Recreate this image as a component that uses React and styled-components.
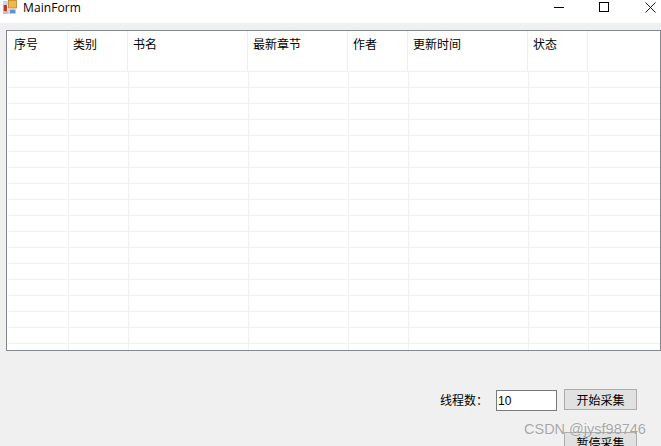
import React from 'react'
import styled, { createGlobalStyle } from 'styled-components'

const Global = createGlobalStyle`
html, body {
  margin: 0;
  padding: 0;
  height: 100%;
  overflow: hidden;
  background: #f0f0f0;
}
`

const columns = [
  { name: '序号', width: 61 },
  { name: '类别', width: 60 },
  { name: '书名', width: 120 },
  { name: '最新章节', width: 100 },
  { name: '作者', width: 60 },
  { name: '更新时间', width: 120 },
  { name: '状态', width: 60 },
]

const rowCount = 18

const Window = styled.div`
width: 661px;
height: 446px;
position: relative;
overflow: hidden;
background: #f0f0f0;
font-family: "Noto Sans CJK SC", "Liberation Sans", sans-serif;
font-size: 12px;
color: #000;
`

const TitleBar = styled.div`
height: 23px;
background: #fff;
display: flex;
align-items: flex-start;
`

const AppIcon = styled.svg`
width: 14px;
height: 14px;
margin: 0 0 0 3px;
flex: none;
`

const TitleText = styled.span`
margin: 0 0 0 6px;
font-family: "Open Sans", "Liberation Sans", sans-serif;
font-size: 12px;
letter-spacing: 0.1px;
line-height: 15px;
color: #000;
`

const WindowButtons = styled.div`
margin-left: auto;
padding: 2px 5px 0 0;
display: flex;
gap: 35px;
`

const WindowButton = styled.svg`
width: 11px;
height: 11px;
display: block;
`

const Grid = styled.div`
margin: 7px 0 0 6px;
width: 655px;
height: 321px;
box-sizing: border-box;
border: 1px solid #828790;
background: #fff;
overflow: hidden;
`

const HeaderRow = styled.div`
display: flex;
height: 40px;
`

const HeaderCell = styled.div`
width: ${props => props.$width}px;
box-sizing: border-box;
padding: 5px 0 0 ${props => props.$inset}px;
border-right: 1px solid #eeeeee;
line-height: 16px;
font-size: 12px;
color: #000;
`

const Row = styled.div`
display: flex;
height: 16px;
margin-left: 1px;
border-top: 1px solid #f0f0f0;
box-sizing: border-box;
`

const Cell = styled.div`
width: ${props => props.$width}px;
box-sizing: border-box;
border-right: 1px solid #f0f0f0;
`

const Filler = styled.div`
flex: 1;
`

const Controls = styled.div`
margin-top: 38px;
display: flex;
justify-content: flex-end;
padding-right: 24px;
`

const ControlLabel = styled.span`
line-height: 19px;
margin: 1px 8px 0 0;
font-size: 12px;
`

const CountInput = styled.input`
width: 61px;
height: 21px;
margin: 1px 7px 0 0;
box-sizing: border-box;
border: 1px solid #7a7a7a;
background: #fff;
padding: 0 1px;
font-family: "Liberation Sans", sans-serif;
font-size: 12px;
color: #000;
outline: none;
`

const ActionButton = styled.button`
width: 73px;
height: 21px;
box-sizing: border-box;
border: 1px solid #adadad;
background: #e1e1e1;
padding: 0;
font-family: "Noto Sans CJK SC", sans-serif;
font-size: 12px;
line-height: 19px;
color: #000;
display: block;
`

const SecondRow = styled.div`
margin-top: 21px;
display: flex;
justify-content: flex-end;
padding-right: 24px;
`

const Watermark = styled.div`
position: absolute;
left: 524px;
top: 420px;
font-family: "Liberation Sans", sans-serif;
font-size: 14.5px;
line-height: 18px;
color: rgba(110, 110, 110, 0.6);
text-shadow: 0 0 1px rgba(255, 255, 255, 0.7);
white-space: nowrap;
`

const App = () => {
  return (
    <Window>
      <Global />
      <TitleBar>
        <AppIcon viewBox="0 0 14 14">
          <rect x="0" y="1" width="5" height="4" fill="#d4d4d4" />
          <rect x="0" y="11" width="5" height="3" fill="#c4c4c4" />
          <rect x="0.5" y="5" width="3.5" height="6" fill="#c8322a" />
          <rect x="5.5" y="0.5" width="8" height="7.5" fill="#f4b942" stroke="#b8862a" strokeWidth="0.8" />
          <rect x="5" y="9" width="2" height="5" fill="#d8d8d8" />
          <rect x="7" y="9.5" width="5.5" height="4" fill="#5a94dc" />
        </AppIcon>
        <TitleText>MainForm</TitleText>
        <WindowButtons>
          <WindowButton viewBox="0 0 11 11"><path d="M1 5.5H11" stroke="#000" strokeWidth="1" /></WindowButton>
          <WindowButton viewBox="0 0 11 11"><rect x="0.5" y="0.5" width="9" height="9" fill="none" stroke="#000" strokeWidth="1" /></WindowButton>
          <WindowButton viewBox="0 0 11 11"><path d="M0.5 0.5L10.5 10.5M10.5 0.5L0.5 10.5" stroke="#000" strokeWidth="0.9" /></WindowButton>
        </WindowButtons>
      </TitleBar>
      <Grid>
        <HeaderRow>
          {columns.map((col, j) => (
            <HeaderCell key={col.name} $width={col.width} $inset={j === 0 ? 7 : 5}>{col.name}</HeaderCell>
          ))}
        </HeaderRow>
        {Array.from({ length: rowCount }).map((_, i) => (
          <Row key={i}>
            {columns.map(col => (
              <Cell key={col.name} $width={col.width} />
            ))}
            <Filler />
          </Row>
        ))}
      </Grid>
      <Controls>
        <ControlLabel>线程数：</ControlLabel>
        <CountInput defaultValue="10" />
        <ActionButton>开始采集</ActionButton>
      </Controls>
      <SecondRow>
        <ActionButton>暂停采集</ActionButton>
      </SecondRow>
      <Watermark>CSDN @jysf98746</Watermark>
    </Window>
  )
}

export default App
